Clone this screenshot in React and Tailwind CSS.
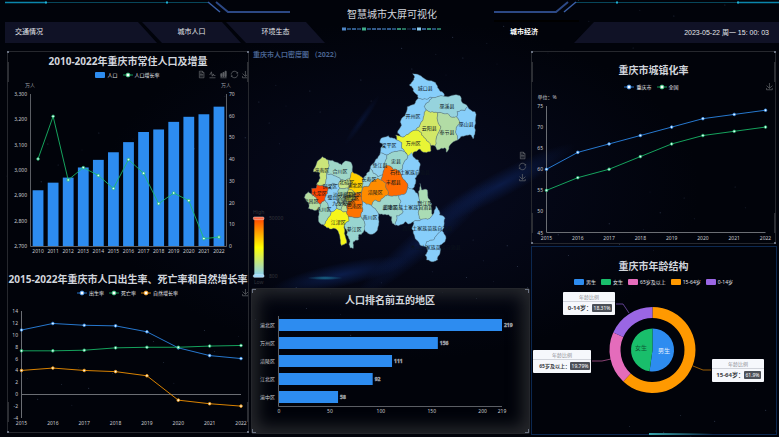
import React from "react";

const BLUE = "#2d8cf0";
const GREEN = "#19be6b";
const ORANGE = "#ff9900";
const PINK = "#e46cbb";
const PURPLE = "#9a66e4";

/* ---------- shared pieces ---------- */

const ICONS = {
  view: ["数据视图", "M17.5,17.3H33M45.4,29.5h-28M11.5,2v56H51V14.8L38.4,2H11.5zM38.4,2.2v12.7H51M45.4,41.7h-28"],
  line: ["切换为折线图", "M4.1,28.9h7.1l9.3-22l7.4,38l9.7-19.7l3,12.8h14.9M4.1,58h51.4"],
  bar: ["切换为柱状图", "M6.7,22.9h10V48h-10V22.9zM24.9,13h10v35h-10V13zM43.2,2h10v46h-10V2zM3.1,58h53.7"],
  restore: [
    "还原",
    "M47,18.9h9.8V8.7M56.3,20.1C52.1,9,40.5,0.6,26.8,2.1C12.6,3.7,1.6,16.2,2.1,30.6M13,41.1H3.1v10.2M3.7,39.9c4.2,11.1,15.8,19.5,29.5,18c14.2-1.6,25.2-14.1,24.7-28.5",
  ],
  save: ["保存为图片", "M4.7,22.9L29.3,45.5L54.7,23.4M4.6,43.6L4.6,58L53.8,58L53.8,43.6M29.2,45.1L29.2,0"],
};

function Toolbox({ names, className = "" }) {
  return (
    <div className={`flex items-center justify-end gap-1 ${className}`}>
      {names.map((n) => (
        <button key={n} type="button" aria-label={ICONS[n][0]} className="block size-[7px] shrink-0">
          <svg viewBox="0 0 60 60" className="block size-full overflow-visible">
            <path d={ICONS[n][1]} fill={n === "bar" ? "#55585e" : "none"} stroke="#686b70" strokeWidth="6" />
          </svg>
        </button>
      ))}
    </div>
  );
}

function LegendMark({ type, color }) {
  return (
    <svg viewBox="0 0 10 6" className="block h-[6px] w-[10px] shrink-0">
      {type === "rect" ? (
        <rect width="10" height="6" rx="1" fill={color} />
      ) : (
        <>
          <path d="M0 3H10" stroke={color} strokeWidth="0.8" />
          <circle cx="5" cy="3" r="2" fill="#fff" stroke={color} strokeWidth="0.8" />
        </>
      )}
    </svg>
  );
}

function LegendRow({ items, tools = [], className = "" }) {
  return (
    <div className={`grid h-[6px] grid-cols-[1fr_auto_1fr] items-center ${className}`}>
      <span />
      <ul className="flex items-center gap-[5px]">
        {items.map(([name, color, type]) => (
          <li key={name} className="flex items-center gap-[2px] text-[5px] leading-[6px] whitespace-nowrap text-gray-200">
            <LegendMark type={type} color={color} />
            {name}
          </li>
        ))}
      </ul>
      <Toolbox names={tools} />
    </div>
  );
}

function Title({ children }) {
  return (
    <h2 className="flex h-5 items-center justify-center text-[10px] leading-5 font-bold whitespace-nowrap text-gray-300">
      {children}
    </h2>
  );
}

function Frame() {
  return (
    <div aria-hidden="true" className="pointer-events-none absolute inset-[1px] border border-[#26282e]">
      <span className="absolute -top-px -left-px size-[2px] bg-gray-500" />
      <span className="absolute -top-px -right-px size-[2px] bg-gray-500" />
      <span className="absolute -bottom-px -left-px size-[2px] bg-gray-500" />
      <span className="absolute -right-px -bottom-px size-[2px] bg-gray-500" />
      <span className="absolute top-[10px] -left-px h-5 w-[2px] bg-[#2c2e34]" />
      <span className="absolute top-[10px] -right-px h-5 w-[2px] bg-[#2c2e34]" />
      <span className="absolute bottom-[10px] -left-px h-5 w-[2px] bg-[#2c2e34]" />
      <span className="absolute -right-px bottom-[10px] h-5 w-[2px] bg-[#2c2e34]" />
    </div>
  );
}

function T({ x, y, anchor = "middle", size = 5, fill = "#c9cbd0", children, ...rest }) {
  return (
    <text x={x} y={y} textAnchor={anchor} dominantBaseline="central" fontSize={size} fill={fill} {...rest}>
      {children}
    </text>
  );
}

function Series({ points, color }) {
  return (
    <g>
      <polyline points={points.map((p) => p.join(",")).join(" ")} fill="none" stroke={color} strokeWidth="1" opacity="0.85" />
      {points.map(([x, y]) => (
        <circle key={x} cx={x} cy={y} r="1.3" fill="#eefaff" stroke={color} strokeWidth="0.8" />
      ))}
    </g>
  );
}

/* ---------- charts ---------- */

const POPULATION = [2920, 2950, 2970, 3010, 3040, 3070, 3110, 3150, 3160, 3190, 3210, 3220, 3250];
const GROWTH = [40.1, 59.7, 30.4, 36.1, 32.5, 26.5, 39.8, 33.5, 19.5, 24.4, 20.9, 3.4, 4.1];

function PopulationChart() {
  const step = 196 / 13;
  const yPop = (v) => 169 - ((v - 2700) / 600) * 152;
  const yRate = (v) => 169 - (v / 70) * 152;
  const cx = (i) => 24.5 + step * (i + 0.5);
  return (
    <svg viewBox="0 0 244 192" className="block w-full">
      <T x={24} y={8} fill="#9a9da3">万人</T>
      <T x={220} y={8} fill="#9a9da3">万人</T>
      <path d="M24.5 17V169.5H220.5V17" fill="none" stroke="#5b5e64" />
      {[2700, 2800, 2900, 3000, 3100, 3200, 3300].map((v) => (
        <T key={v} x={21} y={yPop(v)} anchor="end">{v.toLocaleString("en-US")}</T>
      ))}
      {[0, 10, 20, 30, 40, 50, 60, 70].map((v) => (
        <T key={v} x={223} y={yRate(v)} anchor="start">{v}</T>
      ))}
      {POPULATION.map((v, i) => (
        <rect key={i} x={cx(i) - 5.4} y={yPop(v)} width="10.8" height={169 - yPop(v)} fill={BLUE} />
      ))}
      {POPULATION.map((_, i) => (
        <T key={i} x={cx(i)} y={174}>{2010 + i}</T>
      ))}
      <Series points={GROWTH.map((v, i) => [cx(i), yRate(v)])} color={GREEN} />
    </svg>
  );
}

const RATES = [
  [[10.8, 11.9, 11.6, 11.5, 10.5, 7.8, 6.5, 6.0], BLUE],
  [[7.3, 7.3, 7.4, 7.8, 7.9, 7.9, 8.1, 8.2], GREEN],
  [[4.0, 4.4, 4.0, 3.8, 3.1, -1.0, -1.6, -2.0], ORANGE],
];

function RateChart() {
  const y = (v) => 16 + ((14 - v) / 18) * 107;
  const x = (i) => 15.5 + (i * 219.5) / 7;
  return (
    <svg viewBox="0 0 244 139" className="block w-full">
      <path d="M15.5 16V123M15.5 99.5H235" stroke="#6b6e74" />
      {[14, 12, 10, 8, 6, 4, 2, 0, -2, -4].map((v) => (
        <T key={v} x={12} y={y(v)} anchor="end">{v}</T>
      ))}
      {RATES[0][0].map((_, i) => (
        <T key={i} x={x(i)} y={128}>{2015 + i}</T>
      ))}
      {RATES.map(([data, color]) => (
        <Series key={color} points={data.map((v, i) => [x(i), y(v)])} color={color} />
      ))}
    </svg>
  );
}

const URBAN = [
  [[60, 64, 66, 68, 70, 72, 73, 74], BLUE],
  [[55, 58, 60, 63, 66, 68, 69, 70], GREEN],
];

function UrbanChart() {
  const y = (v) => 17 + ((75 - v) / 30) * 126.5;
  const x = (i) => 16.5 + (i * 219) / 7;
  return (
    <svg viewBox="0 0 247 156" className="block w-full">
      <T x={17} y={8}>单位：%</T>
      <path d="M16.5 17V143.5H235.5" fill="none" stroke="#6b6e74" />
      {[75, 70, 65, 60, 55, 50, 45].map((v) => (
        <T key={v} x={13} y={y(v)} anchor="end">{v}</T>
      ))}
      {URBAN[0][0].map((_, i) => (
        <T key={i} x={x(i)} y={149}>{2015 + i}</T>
      ))}
      {URBAN.map(([data, color]) => (
        <Series key={color} points={data.map((v, i) => [x(i), y(v)])} color={color} />
      ))}
    </svg>
  );
}

const RANKING = [["渝北区", 219], ["万州区", 156], ["涪陵区", 111], ["江北区", 92], ["渝中区", 58]];

function RankChart() {
  const k = 223 / 219;
  return (
    <svg viewBox="0 0 280 124" className="block w-full">
      <path d="M28.5 6V96.5H252" fill="none" stroke="#5b5e64" />
      {RANKING.map(([name, v], i) => {
        const cy = 15 + i * 18;
        return (
          <g key={name}>
            <T x={25} y={cy} anchor="end">{name}</T>
            <rect x="29" y={cy - 6} width={v * k} height="12" fill={BLUE} />
            <T x={31 + v * k} y={cy} anchor="start" fill="#c9cbd0" stroke="#8d9096" strokeWidth="0.4" fontWeight="700">{v}</T>
          </g>
        );
      })}
      {[0, 50, 100, 150, 200, 219].map((v) => (
        <T key={v} x={29 + v * k} y={101}>{v}</T>
      ))}
    </svg>
  );
}

function arc(cx, cy, r0, r1, from, to) {
  const p = (r, t) => {
    const a = t * 2 * Math.PI;
    return `${(cx + r * Math.sin(a)).toFixed(2)} ${(cy - r * Math.cos(a)).toFixed(2)}`;
  };
  const big = to - from > 0.5 ? 1 : 0;
  return `M${p(r0, from)}L${p(r1, from)}A${r1} ${r1} 0 ${big} 1 ${p(r1, to)}L${p(r0, to)}A${r0} ${r0} 0 ${big} 0 ${p(r0, from)}Z`;
}

function Callout({ x, y, w, label, value, size = 6, badge = 20, inset = 3 }) {
  const left = x + w - inset - badge;
  return (
    <g>
      <rect x={x} y={y} width={w} height="23" rx="1" fill="#f6f8fc" />
      <path d={`M${x} ${y + 9.5}H${x + w}`} stroke="#b9bcc4" strokeWidth="0.6" />
      <T x={x + w / 2} y={y + 5} fill="#8a8d94">年龄比例</T>
      <T x={left} y={y + 16} anchor="end" size={size} fill="#3c3f46" fontWeight="700">{label}：</T>
      <rect x={left} y={y + 12} width={badge} height="8" rx="1" fill="#4c5058" />
      <T x={left + badge / 2} y={y + 16} fill="#ffffff">{value}</T>
    </g>
  );
}

function AgeChart() {
  const cx = 122.5;
  const cy = 65;
  return (
    <svg viewBox="0 0 247 150" className="block w-full">
      <path d={arc(cx, cy, 0, 21.5, 0, 0.522)} fill={BLUE} />
      <path d={arc(cx, cy, 0, 21.5, 0.522, 1)} fill={GREEN} />
      <path d={arc(cx, cy, 32, 43, 0, 0.619)} fill={ORANGE} />
      <path d={arc(cx, cy, 32, 43, 0.619, 0.817)} fill={PINK} />
      <path d={arc(cx, cy, 32, 43, 0.817, 1)} fill={PURPLE} />
      <g fill="none" strokeWidth="0.6">
        <path d="M99 28L93 19H86" stroke={PURPLE} />
        <path d="M81 74L72 76H62" stroke={PINK} />
        <path d="M163 81L173 85H181" stroke={ORANGE} />
      </g>
      <T x={111} y={63} size={6} fill="#0d5a34">女生</T>
      <T x={134} y={66} size={6} fill="#e6f1ff">男生</T>
      <Callout x={33} y={7} w={52} label="0-14岁" value="18.31%" />
      <Callout x={3} y={65} w={58} label="65岁及以上" value="19.79%" size={5} inset={1} />
      <Callout x={182} y={74} w={52} label="15-64岁" value="61.9%" badge={17} />
    </svg>
  );
}

/* ---------- district map ---------- */

const LIGHT = "#87cefa";
const DISTRICTS = [
  [LIGHT, "503,86 522,90 545,105 572,113 578,128 596,145 597,154 562,158 545,163 520,160 518,150 508,142 504,130 493,120 502,110 508,98"],
  ["#96d3dd", "562,158 597,154 645,152 650,170 668,185 660,197 636,200 635,216 622,217 607,206 578,203 556,202 545,195 537,185 552,170"],
  [LIGHT, "520,160 545,163 562,158 552,170 537,185 545,195 538,202 528,232 512,256 490,268 468,275 458,265 470,240 466,230 480,212 487,185 508,178"],
  ["#d2e868", "545,195 556,202 578,203 580,235 588,246 575,275 570,303 556,300 545,288 535,275 528,262 512,256 528,232 538,202"],
  ["#b2dca5", "578,203 607,206 622,217 635,216 645,232 635,245 632,262 638,285 615,300 605,322 600,308 578,315 570,303 575,275 588,246 580,235"],
  [LIGHT, "636,200 660,197 668,185 690,200 692,235 690,262 684,282 678,270 660,272 645,280 638,285 632,262 635,245 645,232 635,216"],
  ["#e8f535", "468,275 490,268 512,256 528,262 535,275 545,288 556,300 558,318 540,322 525,312 505,322 492,337 480,320 470,310 470,293 455,285 452,270"],
  [LIGHT, "430,272 445,280 455,285 470,293 470,310 480,320 460,318 440,322 425,330 405,325 407,312 413,300 404,292 412,278"],
  ["#9bd6cd", "425,330 440,322 460,318 480,320 488,333 478,350 472,372 462,378 445,374 432,362 418,372 420,350"],
  ["#92d1ee", "405,325 425,330 420,350 418,372 412,390 398,395 385,385 376,370 385,355 398,340"],
  [LIGHT, "488,333 500,323 508,338 520,345 524,365 522,385 510,400 512,415 500,432 488,425 482,410 470,395 462,378 472,372 478,350"],
  ["#ff6a00", "418,372 425,360 432,362 445,374 462,378 470,395 482,410 488,425 480,447 460,451 435,453 428,450 425,433 423,415 407,405 412,390"],
  ["#9ad4dc", "376,370 385,385 398,395 412,390 407,405 398,400 380,410 368,425 356,425 352,430 355,400 365,385"],
  ["#ff8c00", "398,400 407,405 423,415 425,433 428,450 415,458 405,470 390,465 380,482 365,478 352,470 352,430 356,425 368,425 380,410"],
  ["#a0d7cb", "390,465 405,470 415,458 428,450 435,453 460,451 468,470 465,490 475,500 462,512 455,512 450,540 442,535 440,515 420,508 400,505 385,488 380,482"],
  ["#8ad0f5", "480,447 488,425 500,432 517,445 522,460 525,480 521,497 523,520 530,523 505,530 490,537 480,530 460,542 450,540 455,512 462,512 475,500 465,490 468,470 460,451"],
  ["#aadcb4", "525,415 530,435 547,435 555,465 560,490 563,510 547,523 530,523 523,520 521,497 525,480 522,460 520,440"],
  [LIGHT, "505,530 530,523 547,523 563,510 573,483 583,497 583,510 600,520 597,540 592,555 575,570 565,585 545,590 543,605 525,600 515,585 505,565 500,550"],
  [LIGHT, "592,555 600,570 600,590 585,600 585,625 578,645 565,650 545,645 540,630 548,615 543,605 545,590 565,585 575,570"],
  ["#8fd1f2", "352,470 365,478 380,482 385,488 400,505 402,530 398,550 388,565 375,568 362,560 358,545 355,525 348,515 352,500"],
  ["#98d5d0", "310,515 348,515 355,525 358,545 355,562 340,570 340,585 325,590 325,610 315,608 315,590 305,570 298,540 312,528"],
  ["#f5f51a", "258,500 275,490 288,495 305,500 310,515 312,528 298,540 298,565 305,595 290,602 285,580 280,560 265,550 245,548 236,540 248,520"],
  ["#9fd6c0", "225,478 240,465 250,485 258,500 248,520 236,540 225,535 220,515 222,495"],
  ["#b5dca0", "178,458 190,440 200,448 215,460 225,478 222,495 205,495 190,490 190,472"],
  ["#ff4500", "200,430 212,430 215,418 235,422 250,428 248,445 240,465 225,478 215,460 200,448"],
  ["#cbe57a", "232,335 250,345 252,365 245,385 245,400 240,418 235,422 215,418 225,400 225,385 205,380 215,355"],
  ["#9fd6c8", "250,345 275,352 290,360 300,348 318,352 322,380 315,400 300,408 288,405 275,395 260,388 245,385 252,365"],
  ["#96d3e4", "245,385 260,388 275,395 288,405 280,418 262,415 255,430 250,428 235,422 240,418 245,400"],
  ["#8bcff6", "255,430 262,415 280,418 285,430 278,450 275,490 258,500 250,485 240,465 248,445 250,428"],
  ["#c8e48a", "288,405 300,408 315,400 318,415 310,430 285,430 280,418"],
  ["#ffce00", "322,380 345,392 355,400 352,430 350,440 330,445 310,430 318,415 315,400"],
  ["#a5d8b0", "285,430 310,430 305,450 300,465 288,495 275,490 278,450"],
  ["#d6dc4a", "310,430 330,445 328,465 310,470 300,465 305,450"],
  ["#b9dd9c", "300,465 310,470 305,485 305,500 288,495"],
  ["#ff7300", "352,430 352,470 352,500 348,515 310,515 305,500 305,485 310,470 328,465 330,445 350,440"],
];

const PLACES = [
  ["城口县", 541, 128], ["巫溪县", 606, 182], ["开州区", 504, 214], ["云阳县", 553, 248], ["奉节县", 606, 260],
  ["巫山县", 664, 236], ["万州区", 505, 294], ["梁平区", 432, 301], ["忠县", 453, 347], ["垫江县", 405, 359],
  ["石柱土家族自治县", 495, 381], ["丰都县", 445, 410], ["长寿区", 372, 401], ["涪陵区", 391, 442], ["武隆区", 435, 485],
  ["彭水苗族土家族自治县", 490, 485], ["黔江区", 540, 475], ["酉阳土家族苗族自治县", 547, 550],
  ["秀山土家族苗族自治县", 572, 607], ["南川区", 375, 516], ["綦江区", 328, 553], ["江津区", 280, 531],
  ["永川区", 237, 493], ["荣昌区", 198, 468], ["大足区", 223, 443], ["潼南区", 230, 374], ["合川区", 285, 377],
  ["铜梁区", 254, 422], ["璧山区", 270, 455], ["北碚区", 305, 412], ["渝北区", 330, 421], ["沙坪坝区", 294, 447],
  ["九龙坡区", 292, 475], ["江北区", 326, 448], ["渝中区", 312, 454], ["南岸区", 320, 459], ["大渡口区", 302, 468],
  ["巴南区", 328, 484],
];

/* Splits an edge with a repeatable offset, so that neighbours share one border. */
function splitEdge(a, b, depth) {
  if (depth === 0) return [a];
  const len = Math.hypot(b[0] - a[0], b[1] - a[1]);
  const mx = (a[0] + b[0]) / 2;
  const my = (a[1] + b[1]) / 2;
  const h = Math.sin(mx * 12.9898 + my * 78.233) * 43758.5453;
  const offset = (h - Math.floor(h) - 0.5) * Math.min(len, 18) * 0.35;
  const flip = a[0] < b[0] || (a[0] === b[0] && a[1] < b[1]) ? 1 : -1;
  const m = [mx - ((b[1] - a[1]) / len) * offset * flip, my + ((b[0] - a[0]) / len) * offset * flip];
  return [...splitEdge(a, m, depth - 1), ...splitEdge(m, b, depth - 1)];
}

function borderPoints(text) {
  const pts = text.split(" ").map((p) => p.split(",").map(Number));
  return pts
    .flatMap((p, i) => splitEdge(p, pts[(i + 1) % pts.length], 2))
    .map((p) => `${p[0].toFixed(1)},${p[1].toFixed(1)}`)
    .join(" ");
}

function DensityMap() {
  return (
    <svg viewBox="15 45 840 684" className="block w-full">
      <defs>
        <linearGradient id="density" x1="0" y1="0" x2="0" y2="1">
          <stop offset="0" stopColor="#ff4500" />
          <stop offset="0.5" stopColor="#ffff00" />
          <stop offset="1" stopColor="#87cefa" />
        </linearGradient>
      </defs>
      {DISTRICTS.map(([fill, pts]) => (
        <polygon key={pts} points={borderPoints(pts)} fill={fill} stroke="#5f7f8c" strokeWidth="1.2" strokeLinejoin="round" />
      ))}
      {PLACES.map(([name, x, y]) => (
        <T key={name} x={x} y={y} size={15} fill="#0c141c">{name}</T>
      ))}
      <rect x="28" y="520" width="28" height="174" fill="url(#density)" />
      <rect x="25" y="516" width="32" height="8" rx="3" fill="#ff6a45" stroke="#e8d0c8" strokeWidth="1.5" />
      <rect x="25" y="689" width="32" height="8" rx="3" fill="#9fd8fa" stroke="#dfeefa" strokeWidth="1.5" />
      <T x={41} y={500} size={15} fill="#33363c">High</T>
      <T x={72} y={519} size={15} fill="#33363c" anchor="start">50000</T>
      <T x={72} y={692} size={15} fill="#33363c" anchor="start">800</T>
      <T x={41} y={711} size={15} fill="#33363c">Low</T>
    </svg>
  );
}

/* ---------- header ---------- */

function HeaderLine({ flip }) {
  return (
    <svg viewBox="0 0 285 22" className={`block h-[22px] w-[285px] ${flip ? "-scale-x-100" : ""}`} fill="none">
      <path d="M0 2.5H203" stroke="#07465a" />
      <path d="M0 2.5H41" stroke="#0b86ac" strokeWidth="1.5" />
      <path d="M40 2.5h2M161 2.5h2" stroke="#1fb3d6" strokeWidth="2" />
      <path d="M203 2L215 12" stroke="#3a5fa8" strokeWidth="1.5" />
      <path d="M211 2L223 12H285" stroke="#2c4885" strokeWidth="2" />
      <path d="M200 21H285" stroke="#000000" strokeWidth="2" />
    </svg>
  );
}

function TitleDashes() {
  const colors = ["#4f86c6", "#2f5f8f", "#3d72ad", "#2b5480", "#3fae8a", "#2f5f8f", "#3d72ad", "#4a6fa5", "#2f5f8f", "#3d72ad",
    "#2f5f8f", "#3fae8a", "#2f8a70", "#16233a", "#3d72ad", "#8fd0f0", "#3d72ad", "#3fae8a", "#2f5f8f", "#2f8a70"];
  return (
    <svg viewBox="0 0 100 4" className="block h-1 w-[100px]">
      {colors.map((c, i) => (
        <rect key={i} x={i * 5} y={i % 11 === 4 || i === 0 || i === 15 ? 0.5 : 1.2} width="4" height={i % 11 === 4 || i === 0 || i === 15 ? 3 : 1.6} fill={c} />
      ))}
    </svg>
  );
}

function Header() {
  return (
    <header className="text-gray-200">
      <div className="grid h-[22px] grid-cols-[1fr_auto_1fr] pl-[5px]">
        <HeaderLine />
        <h1 className="pt-1 text-[10px] leading-5 whitespace-nowrap text-gray-300">智慧城市大屏可视化</h1>
        <div className="flex justify-end">
          <HeaderLine flip />
        </div>
      </div>
      <nav className="grid h-[21px] grid-cols-[1fr_auto_1fr] pl-[5px] text-[7px]">
        <div className="flex">
          <button type="button" className="w-[152px] bg-[#101226] pl-[10px] text-left [clip-path:polygon(0_0,133px_0,100%_100%,0_100%)]">
            交通情况
          </button>
          <button type="button" className="-ml-[15px] w-[99px] bg-[#101226] [clip-path:polygon(0_0,80px_0,100%_100%,20px_100%)]">
            城市人口
          </button>
          <button type="button" className="-ml-[15px] w-[99px] bg-[#101226] [clip-path:polygon(0_0,80px_0,100%_100%,20px_100%)]">
            环境生态
          </button>
        </div>
        <div className="pt-[5px]">
          <TitleDashes />
        </div>
        <div className="flex justify-end">
          <button type="button" className="px-9 font-bold text-white">城市经济</button>
          <time
            dateTime="2023-05-22T15:00:03"
            className="w-[205px] bg-[#101226] pr-[10px] text-right leading-[21px] font-['Liberation_Sans','Noto_Sans_CJK_SC',sans-serif] [clip-path:polygon(20px_0,100%_0,100%_100%,0_100%)]"
          >
            2023-05-22 周一 15: 00: 03
          </time>
        </div>
      </nav>
    </header>
  );
}

/* ---------- night-sky backdrop ---------- */

const STARS = Array.from({ length: 110 }, (_, i) => [(i * 197.3 + 31) % 779, (i * 131.7 + (i % 7) * 23) % 437, 0.12 + (i % 5) * 0.06]);

function Sky() {
  return (
    <svg aria-hidden="true" viewBox="0 0 779 437" preserveAspectRatio="none" className="pointer-events-none absolute inset-0 -z-10 size-full">
      <defs>
        <radialGradient id="haze">
          <stop offset="0" stopColor="#0b1030" />
          <stop offset="1" stopColor="#0b1030" stopOpacity="0" />
        </radialGradient>
        <radialGradient id="nebula">
          <stop offset="0" stopColor="#0d2258" />
          <stop offset="1" stopColor="#0d2258" stopOpacity="0" />
        </radialGradient>
        <radialGradient id="spark">
          <stop offset="0" stopColor="#1d7fa0" />
          <stop offset="1" stopColor="#1d7fa0" stopOpacity="0" />
        </radialGradient>
      </defs>
      <rect width="779" height="437" fill="#01030a" />
      <ellipse cx="400" cy="190" rx="300" ry="170" fill="url(#haze)" opacity="0.6" />
      <ellipse cx="500" cy="185" rx="85" ry="13" fill="url(#nebula)" transform="rotate(-28 500 185)" opacity="0.7" />
      <ellipse cx="425" cy="240" rx="90" ry="14" fill="url(#nebula)" transform="rotate(-40 425 240)" opacity="0.6" />
      <ellipse cx="340" cy="275" rx="70" ry="12" fill="url(#nebula)" transform="rotate(-12 340 275)" opacity="0.8" />
      <ellipse cx="362" cy="120" rx="30" ry="4" fill="url(#nebula)" transform="rotate(-55 362 120)" opacity="0.4" />
      <ellipse cx="325" cy="278" rx="18" ry="2" fill="url(#spark)" opacity="0.8" />
      {STARS.map(([x, y, o], i) => (
        <circle key={i} cx={x} cy={y} r="0.5" fill="#9db8e8" opacity={o} />
      ))}
    </svg>
  );
}

export default function App() {
  return (
    <div className="relative isolate min-h-screen overflow-hidden bg-black font-['Noto_Sans','Noto_Sans_CJK_SC',sans-serif]">
      <Sky />
      <Header />
      <main className="mt-[7px] grid grid-cols-[244fr_280fr_247fr] items-start pr-[2px] pl-[6px]">
        <section className="relative pt-px">
          <Frame />
          <Title>2010-2022年重庆市常住人口及增量</Title>
          <LegendRow
            className="pr-[1px]"
            items={[["人口", BLUE, "rect"], ["人口增长率", GREEN, "line"]]}
            tools={["view", "line", "bar", "restore", "save"]}
          />
          <PopulationChart />
          <Title>2015-2022年重庆市人口出生率、死亡率和自然增长率</Title>
          <LegendRow
            className="pr-[1px]"
            items={[["出生率", BLUE, "line"], ["死亡率", GREEN, "line"], ["自然增长率", ORANGE, "line"]]}
            tools={["save"]}
          />
          <RateChart />
        </section>

        <div>
          <section className="relative">
            <h2 className="h-[10px] pl-[3px] text-[7px] leading-[10px] font-bold whitespace-nowrap text-[#48628f]">
              重庆市人口密度图 （2022）
            </h2>
            <DensityMap />
            <Toolbox names={["view", "restore", "save"]} className="absolute top-[102px] right-1 flex-col" />
          </section>
          <section className="relative pt-[2px]">
            <div
              aria-hidden="true"
              className="pointer-events-none absolute inset-y-0 right-0 left-px -z-10 rounded-xs border border-[#24262b] shadow-[inset_0_0_16px_6px_#26282c]"
            >
              <span className="absolute top-0 left-0 size-1 border-t border-l border-gray-500" />
              <span className="absolute top-0 right-0 size-1 border-t border-r border-gray-500" />
              <span className="absolute bottom-0 left-0 size-1 border-b border-l border-gray-500" />
              <span className="absolute right-0 bottom-0 size-1 border-r border-b border-gray-500" />
            </div>
            <Title>人口排名前五的地区</Title>
            <RankChart />
          </section>
        </div>

        <div className="grid gap-px">
          <section className="relative pt-[10px]">
            <Frame />
            <Title>重庆市城镇化率</Title>
            <LegendRow className="mt-[3px] pr-1" items={[["重庆市", BLUE, "line"], ["全国", GREEN, "line"]]} tools={["save"]} />
            <UrbanChart />
          </section>
          <section className="relative pt-[10px]">
            <div aria-hidden="true" className="pointer-events-none absolute inset-y-0 right-0 left-px border border-[#0c2850]">
              <span className="absolute -bottom-px left-[117px] h-[2px] w-16 bg-linear-to-r from-[#3aa6ae] to-transparent" />
            </div>
            <Title>重庆市年龄结构</Title>
            <LegendRow
              className="mt-[3px]"
              items={[
                ["男生", BLUE, "rect"],
                ["女生", GREEN, "rect"],
                ["65岁及以上", PINK, "rect"],
                ["15-64岁", ORANGE, "rect"],
                ["0-14岁", PURPLE, "rect"],
              ]}
            />
            <AgeChart />
          </section>
        </div>
      </main>
    </div>
  );
}
